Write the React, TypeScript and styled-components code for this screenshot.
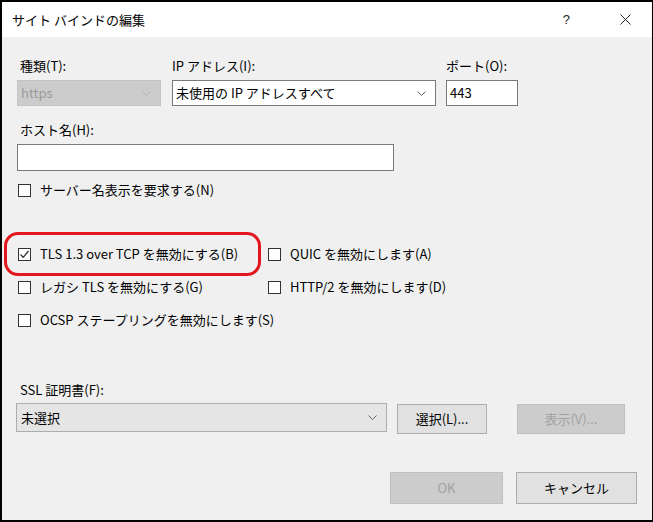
import React from 'react';
import styled, { createGlobalStyle } from 'styled-components';

const GlobalStyle = createGlobalStyle`
  html, body {
    margin: 0;
    padding: 0;
    background: #000;
  }
  * {
    box-sizing: border-box;
  }
`;

const Chevron = ({ color = '#606060' }: { color?: string }) => (
  <svg width="9" height="5" viewBox="0 0 9 5">
    <path d="M0.5 0.5 L4.5 4.5 L8.5 0.5" fill="none" stroke={color} strokeWidth="1" />
  </svg>
);

const CheckMark = () => (
  <svg width="11" height="11" viewBox="0 0 11 11">
    <path d="M1.5 5.5 L4.2 8.3 L9.5 2" fill="none" stroke="#333" strokeWidth="1.3" />
  </svg>
);

type CheckProps = {
  label: string;
  checked?: boolean;
  highlight?: boolean;
};

const Check = ({ label, checked, highlight }: CheckProps) => (
  <CheckRow $highlight={highlight}>
    <Box>{checked && <CheckMark />}</Box>
    <span>{label}</span>
  </CheckRow>
);

const App = () => {
  return (
    <>
      <GlobalStyle />
      <Window>
        <TitleBar>
          <Title>サイト バインドの編集</Title>
          <TitleButtons>
            <Help>?</Help>
            <svg width="11" height="11" viewBox="0 0 11 11">
              <path d="M0.5 0.5 L10.5 10.5 M10.5 0.5 L0.5 10.5" stroke="#222" strokeWidth="1" />
            </svg>
          </TitleButtons>
        </TitleBar>

        <Body>
          <TopRow>
            <Field $width={144}>
              <Label>種類(T):</Label>
              <Combo $disabled>
                <span>https</span>
                <Chevron color="#b5b5b5" />
              </Combo>
            </Field>
            <Field $width={264}>
              <Label $flush>IP アドレス(I):</Label>
              <Combo>
                <span>未使用の IP アドレスすべて</span>
                <Chevron />
              </Combo>
            </Field>
            <Field $width={72}>
              <Label $flush>ポート(O):</Label>
              <TextBox>443</TextBox>
            </Field>
          </TopRow>

          <HostField>
            <Label>ホスト名(H):</Label>
            <TextBox $height={27} />
          </HostField>

          <SniRow>
            <Check label="サーバー名表示を要求する(N)" />
          </SniRow>

          <CheckGrid>
            <Check label="TLS 1.3 over TCP を無効にする(B)" checked highlight />
            <Check label="QUIC を無効にします(A)" />
            <Check label="レガシ TLS を無効にする(G)" />
            <Check label="HTTP/2 を無効にします(D)" />
            <Check label="OCSP ステープリングを無効にします(S)" />
          </CheckGrid>

          <CertSection>
            <Label>SSL 証明書(F):</Label>
            <CertRow>
              <CertCombo>
                <span>未選択</span>
                <Chevron />
              </CertCombo>
              <Button $width={90}>選択(L)...</Button>
              <Button $width={108} $disabled $gap={30}>
                表示(V)...
              </Button>
            </CertRow>
          </CertSection>

          <Footer>
            <Button $width={113} $height={32} $disabled>
              OK
            </Button>
            <Button $width={121} $height={32} $gap={13}>
              キャンセル
            </Button>
          </Footer>
        </Body>
      </Window>
    </>
  );
};

const Window = styled.div`
  width: 653px;
  height: 522px;
  display: flex;
  flex-direction: column;
  border-style: solid;
  border-color: #000;
  border-width: 2px 1px 2px 2px;
  font-family: 'Noto Sans CJK JP', 'Noto Sans', sans-serif;
  font-size: 13px;
  line-height: 16px;
  color: #000;
  overflow: hidden;
`;

const TitleBar = styled.div`
  height: 35px;
  flex-shrink: 0;
  display: flex;
  align-items: center;
  justify-content: space-between;
  background: #fff;
  padding: 0 21px 0 10px;
`;

const Title = styled.div`
  font-size: 13px;
`;

const TitleButtons = styled.div`
  display: flex;
  align-items: center;
  gap: 50px;
`;

const Help = styled.span`
  font-family: 'Liberation Sans', sans-serif;
  font-size: 13px;
  color: #222;
`;

const Body = styled.div`
  flex: 1;
  display: flex;
  flex-direction: column;
  background: #f0f0f0;
  padding: 21px 15px 16px 15px;
`;

const TopRow = styled.div`
  display: flex;
  gap: 10px;
`;

const Field = styled.div<{ $width: number }>`
  width: ${(p) => p.$width}px;
  display: flex;
  flex-direction: column;
  gap: 6px;
  &:first-child {
    margin-right: 1px;
  }
`;

const Label = styled.div<{ $flush?: boolean }>`
  height: 16px;
  padding-left: ${(p) => (p.$flush ? 0 : 3)}px;
  white-space: nowrap;
`;

const Combo = styled.div<{ $disabled?: boolean }>`
  height: 26px;
  display: flex;
  align-items: center;
  justify-content: space-between;
  padding: 0 9px 0 3px;
  background: ${(p) => (p.$disabled ? '#cccccc' : '#fff')};
  border: 1px solid ${(p) => (p.$disabled ? '#c4c4c4' : '#7a7a7a')};
  color: ${(p) => (p.$disabled ? '#9a9a9a' : '#000')};
`;

const TextBox = styled.div<{ $height?: number }>`
  height: ${(p) => p.$height ?? 26}px;
  display: flex;
  align-items: center;
  padding: 0 3px;
  background: #fff;
  border: 1px solid #7a7a7a;
`;

const HostField = styled.div`
  width: 377px;
  margin-top: 16px;
  display: flex;
  flex-direction: column;
  gap: 6px;
`;

const SniRow = styled.div`
  margin-top: 11px;
  margin-left: 1px;
`;

const CheckRow = styled.div<{ $highlight?: boolean }>`
  position: relative;
  height: 16px;
  display: flex;
  align-items: center;
  gap: 9px;
  white-space: nowrap;

  ${(p) =>
    p.$highlight &&
    `
    &::before {
      content: '';
      position: absolute;
      left: -14px;
      top: -14px;
      width: 251px;
      height: 38px;
      border: 3px solid #e3161f;
      border-radius: 14px;
      pointer-events: none;
    }
  `}
`;

const Box = styled.div`
  width: 13px;
  height: 13px;
  flex-shrink: 0;
  display: flex;
  align-items: center;
  justify-content: center;
  background: #fff;
  border: 1px solid #333;
`;

const CheckGrid = styled.div`
  margin-top: 48px;
  margin-left: 1px;
  display: grid;
  grid-template-columns: 250px auto;
  row-gap: 17px;
`;

const CertSection = styled.div`
  margin-top: 54px;
  display: flex;
  flex-direction: column;
  gap: 5px;
`;

const CertRow = styled.div`
  display: flex;
  align-items: flex-start;
  margin-left: -1px;
`;

const CertCombo = styled.div`
  width: 371px;
  height: 29px;
  display: flex;
  align-items: center;
  justify-content: space-between;
  padding: 0 9px 0 4px;
  background: #e5e5e5;
  border: 1px solid #adadad;
`;

const Button = styled.div<{
  $width: number;
  $height?: number;
  $disabled?: boolean;
  $gap?: number;
}>`
  width: ${(p) => p.$width}px;
  height: ${(p) => p.$height ?? 30}px;
  margin-left: ${(p) => p.$gap ?? 10}px;
  margin-top: ${(p) => (p.$height ? 0 : 1)}px;
  display: flex;
  align-items: center;
  justify-content: center;
  background: ${(p) => (p.$disabled ? '#cccccc' : '#e1e1e1')};
  border: 1px solid ${(p) => (p.$disabled ? '#bfbfbf' : '#adadad')};
  color: ${(p) => (p.$disabled ? '#a0a0a0' : '#000')};
  white-space: nowrap;
`;

const Footer = styled.div`
  margin-top: auto;
  display: flex;
  justify-content: flex-end;
`;

export default App;
